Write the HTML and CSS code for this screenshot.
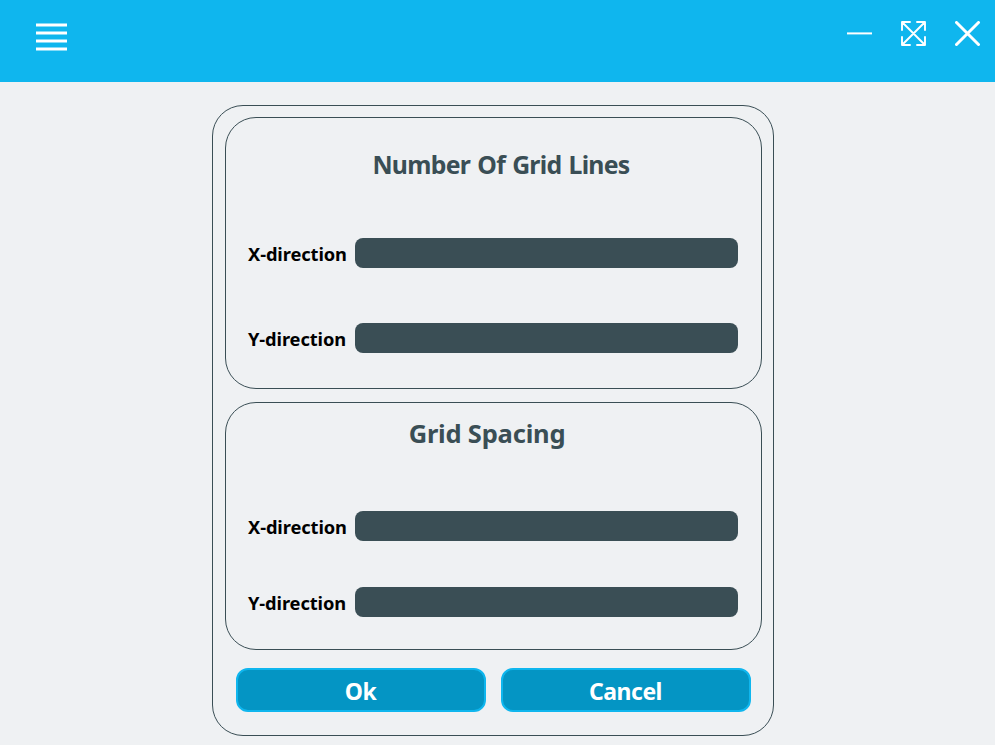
FILE: index.html
```html
<!DOCTYPE html>
<html lang="en">
<head>
<meta charset="utf-8">
<title>Grid Lines</title>
<link rel="stylesheet" href="styles.css">
</head>
<body>
<header class="titlebar">
  <svg class="menu" width="32" height="28" viewBox="0 0 32 28"><path d="M0 2h31M0 10h31M0 18h31M0 26h31"/></svg>
  <div class="window-controls">
    <svg width="25" height="26" viewBox="0 0 25 26"><path class="thin" d="M0 12.4h25"/></svg>
    <svg width="25" height="26" viewBox="0 0 25 26"><path class="expand" d="M2 2l21 21M23 2L2 23M1 9V1H9M16 1h8V9M24 16v8H16M9 24H1V16"/></svg>
    <svg width="26" height="26" viewBox="0 0 26 26"><path class="close" d="M1.5 1.5l22 22M23.5 1.5L1.5 23.5"/></svg>
  </div>
</header>
<main class="dialog">
  <section class="group lines">
    <h2><span>Number Of Grid Lines</span></h2>
    <label class="row"><span class="x">X-direction</span><input type="text"></label>
    <label class="row"><span class="y">Y-direction</span><input type="text"></label>
  </section>
  <section class="group spacing">
    <h2><span>Grid Spacing</span></h2>
    <label class="row"><span class="x">X-direction</span><input type="text"></label>
    <label class="row"><span class="y">Y-direction</span><input type="text"></label>
  </section>
  <div class="actions">
    <button type="button" class="ok">Ok</button>
    <button type="button" class="cancel">Cancel</button>
  </div>
</main>
</body>
</html>
```
FILE: styles.css
```css
* { box-sizing: border-box; }
body {
  margin: 0;
  height: 745px;
  overflow: hidden;
  background: #eff1f3;
  font-family: "Noto Sans", "Open Sans", sans-serif;
}
svg { display: block; fill: none; stroke: #fff; }
.titlebar {
  height: 82px;
  padding: 21px 14px 0 36px;
  display: flex;
  justify-content: space-between;
  align-items: flex-start;
  background: #0fb6ee;
}
.menu { margin-top: 2px; stroke-width: 2.8; }
.window-controls { display: flex; gap: 29px; }
.thin { stroke-width: 2; }
.expand { stroke-width: 1.9; stroke-linecap: round; stroke-linejoin: round; }
.close { stroke-width: 3; stroke-linecap: round; }
.dialog {
  width: 562px;
  height: 631px;
  margin: 23px 0 0 212px;
  padding: 11px 12px 0;
  border: 1px solid #3a4e55;
  border-radius: 31px;
}
.group {
  width: 537px;
  border: 1px solid #3a4e55;
  border-radius: 31px;
  padding: 0 22px;
}
.lines { height: 272px; }
.spacing { height: 248px; margin-top: 13px; }
h2 {
  margin: 0;
  height: 36px;
  font-size: 25.5px;
  line-height: 36px;
  font-weight: 700;
  color: #3a4e55;
  text-align: center;
  white-space: nowrap;
}
.lines h2 {
  margin: 28px 0 56px 15px;
  font-size: 24.8px;
  letter-spacing: -0.72px;
  word-spacing: 1.4px;
}
.spacing h2 { margin: 12px 0 60px -13px; letter-spacing: -0.2px; }
.row { display: flex; align-items: center; height: 30px; }
.row span {
  width: 107px;
  flex: none;
  padding-top: 2px;
  font-size: 18.3px;
  line-height: 30px;
  font-weight: 700;
  letter-spacing: -0.1px;
  white-space: nowrap;
  color: #000;
}
.row input {
  width: 383px;
  height: 30px;
  padding: 0 8px;
  border: 0;
  border-radius: 8px;
  background: #3a4e55;
  color: #fff;
}
.lines .row + .row { margin-top: 55px; }
.spacing .row + .row { margin-top: 46px; }
.actions { display: flex; gap: 15px; margin: 18px 0 0 11px; }
button {
  width: 250px;
  height: 44px;
  padding: 2px 1px 0 0;
  border: 2px solid #0fb6ee;
  border-radius: 12px;
  background: #0495c4;
  color: #fff;
  font: 700 23px "Noto Sans", sans-serif;
  letter-spacing: -0.5px;
}
```
